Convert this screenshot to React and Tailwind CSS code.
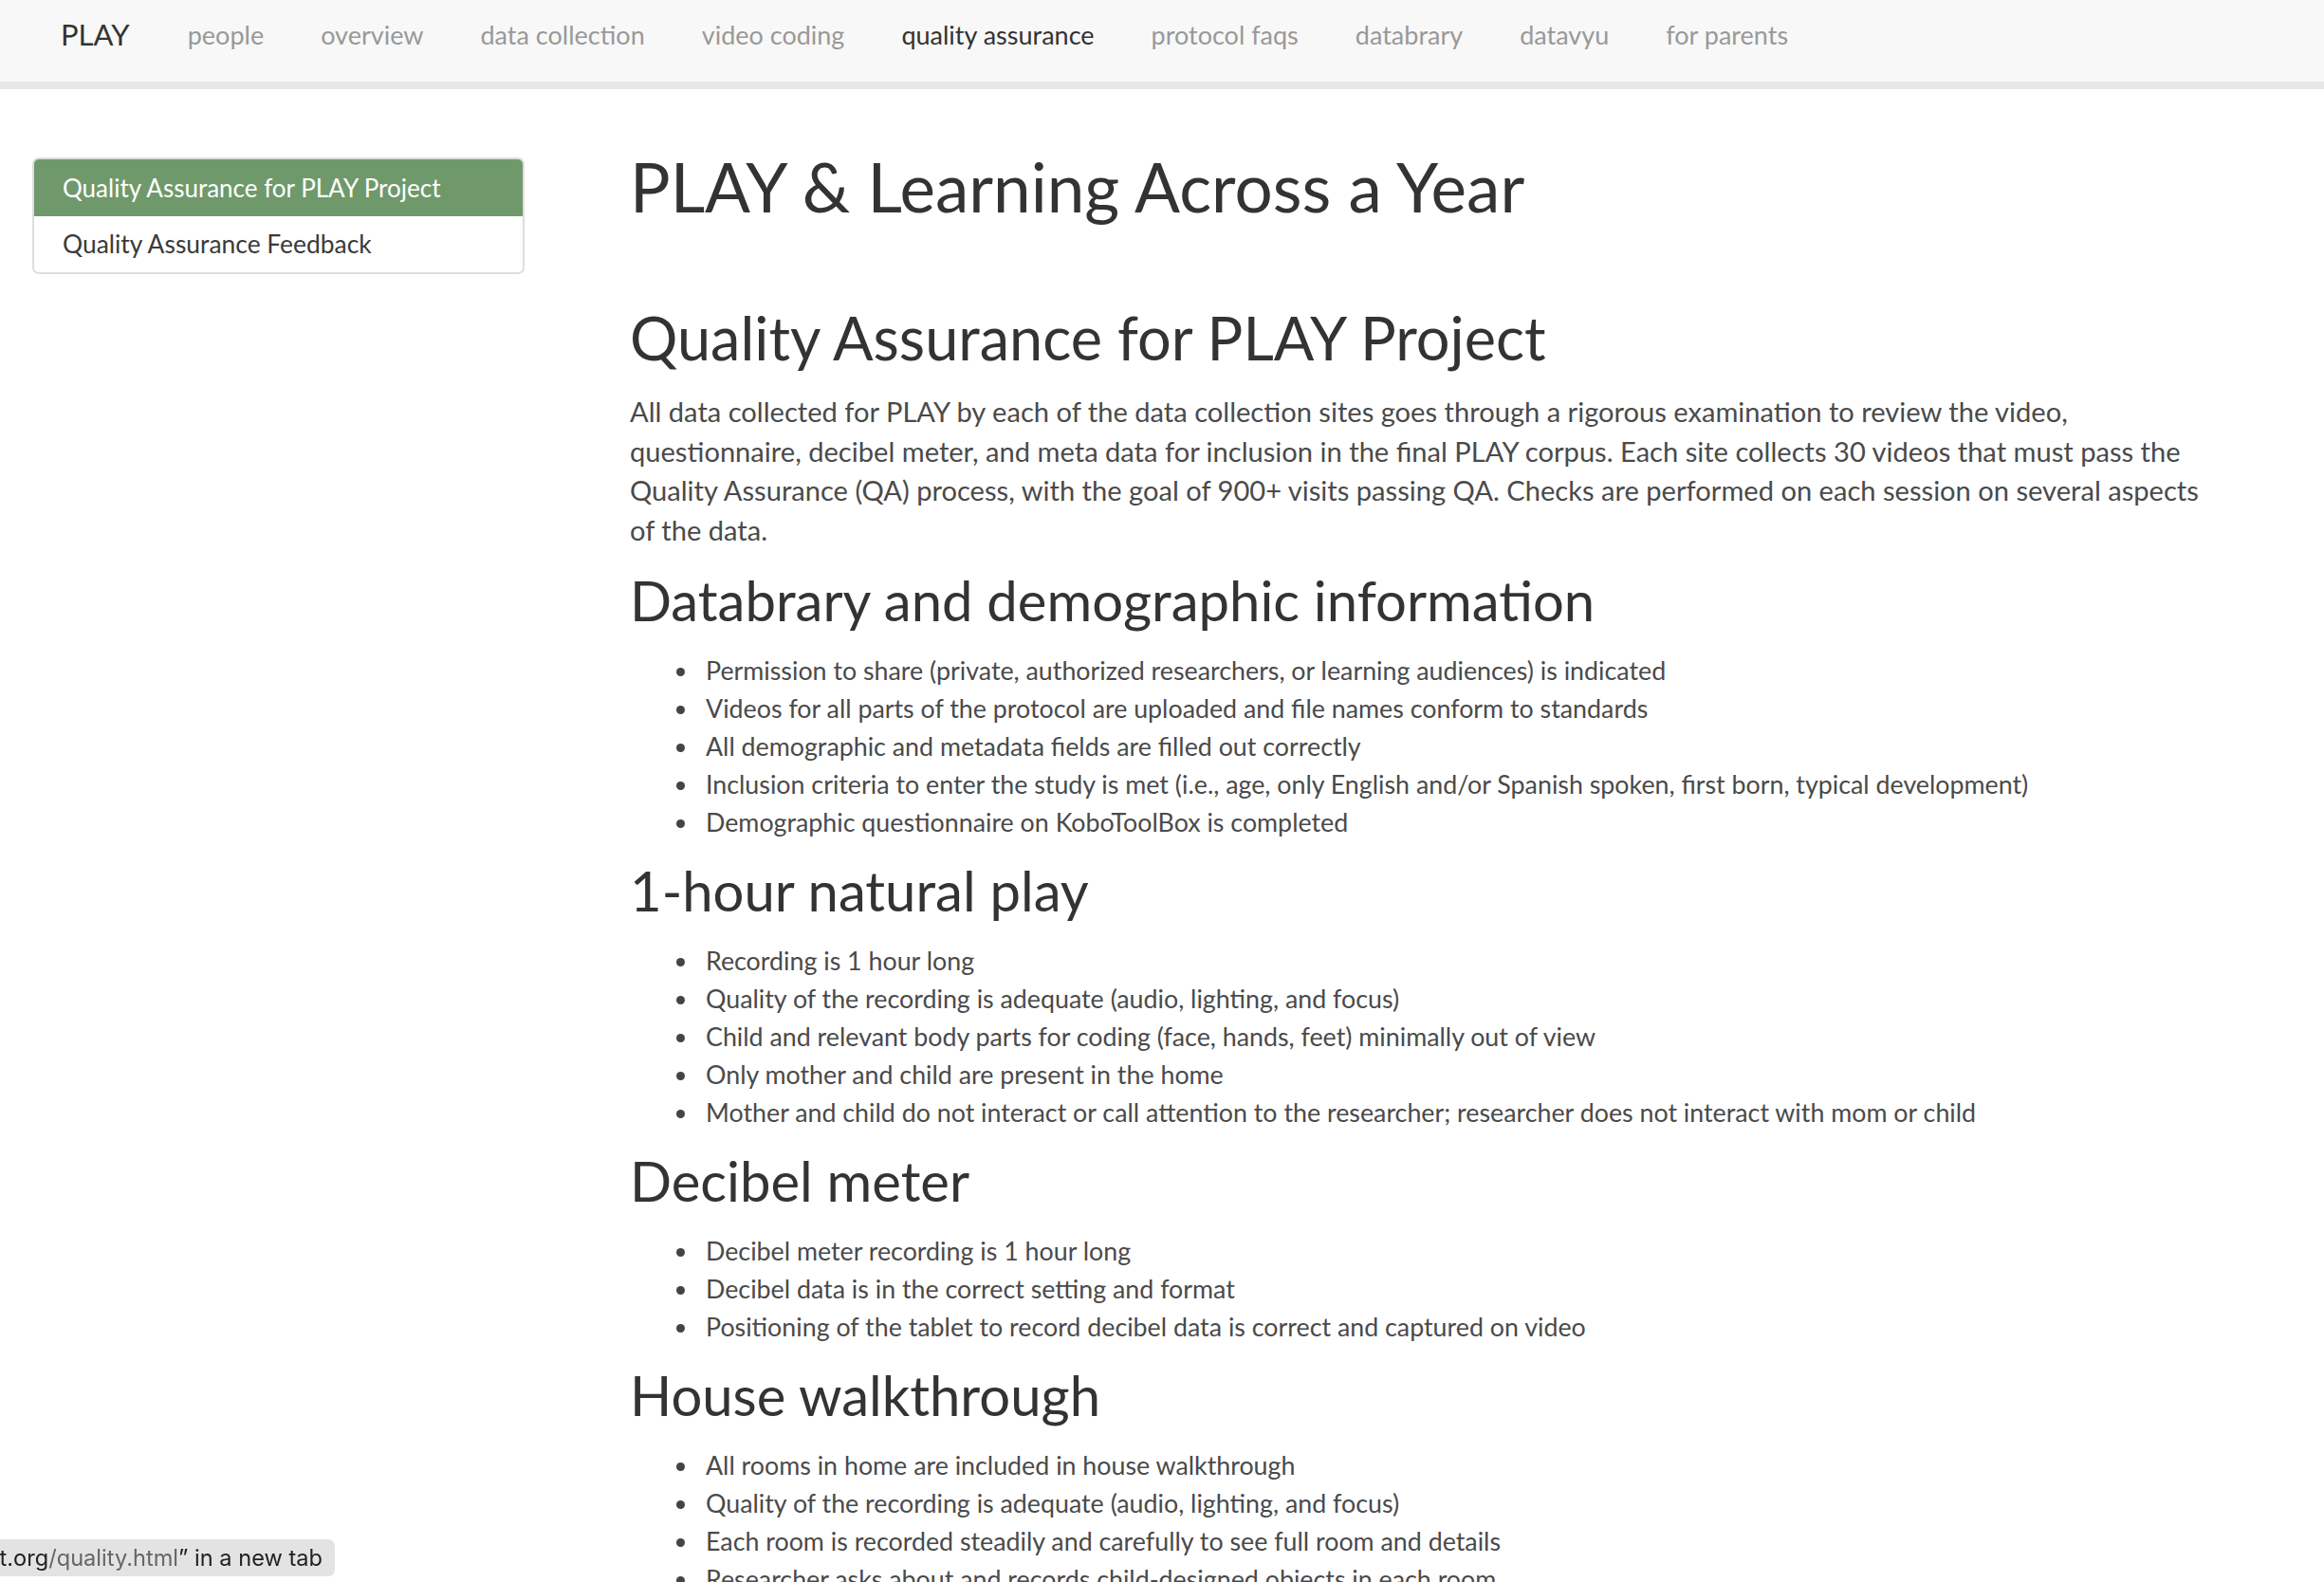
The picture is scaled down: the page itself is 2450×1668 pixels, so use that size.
import React from "react";

const navItems = [
  "people",
  "overview",
  "data collection",
  "video coding",
  "quality assurance",
  "protocol faqs",
  "databrary",
  "datavyu",
  "for parents",
];

const sections = [
  {
    title: "Databrary and demographic information",
    items: [
      "Permission to share (private, authorized researchers, or learning audiences) is indicated",
      "Videos for all parts of the protocol are uploaded and file names conform to standards",
      "All demographic and metadata fields are filled out correctly",
      "Inclusion criteria to enter the study is met (i.e., age, only English and/or Spanish spoken, first born, typical development)",
      "Demographic questionnaire on KoboToolBox is completed",
    ],
  },
  {
    title: "1-hour natural play",
    items: [
      "Recording is 1 hour long",
      "Quality of the recording is adequate (audio, lighting, and focus)",
      "Child and relevant body parts for coding (face, hands, feet) minimally out of view",
      "Only mother and child are present in the home",
      "Mother and child do not interact or call attention to the researcher; researcher does not interact with mom or child",
    ],
  },
  {
    title: "Decibel meter",
    items: [
      "Decibel meter recording is 1 hour long",
      "Decibel data is in the correct setting and format",
      "Positioning of the tablet to record decibel data is correct and captured on video",
    ],
  },
  {
    title: "House walkthrough",
    items: [
      "All rooms in home are included in house walkthrough",
      "Quality of the recording is adequate (audio, lighting, and focus)",
      "Each room is recorded steadily and carefully to see full room and details",
      "Researcher asks about and records child-designed objects in each room",
    ],
  },
];

export default function App() {
  return (
    <div
      className="min-h-screen bg-white text-[#333]"
      style={{ fontFamily: '"Source Sans Pro", Lato, "Open Sans", sans-serif' }}
    >
      <nav className="h-[94px] bg-[#f8f8f8] border-b-[8px] border-[#e7e7e7] flex items-center pl-[64px]">
        <span className="text-[31px] leading-none text-[#333] mr-[61px] -mt-[14px]">PLAY</span>
        <div className="flex items-center gap-[60px] -mt-[14px]">
          {navItems.map((n) => (
            <span
              key={n}
              className={
                "text-[27px] leading-none " +
                (n === "quality assurance" ? "text-[#333]" : "text-[#999]")
              }
            >
              {n}
            </span>
          ))}
        </div>
      </nav>

      <div className="flex pl-[34px]">
        <aside className="w-[519px] shrink-0 pt-[72px]">
          <div className="rounded-[7px] border-2 border-[#ddd] overflow-hidden">
            <div className="h-[60px] bg-[#6f996b] text-white text-[26px] flex items-center pl-[30px]">
              Quality Assurance for PLAY Project
            </div>
            <div className="h-[59px] bg-white text-[#3a3a3a] text-[26.4px] flex items-center pl-[30px]">
              Quality Assurance Feedback
            </div>
          </div>
        </aside>

        <main className="ml-[111px] w-[1661px] pt-[60px]">
          <h1 className="text-[71px] leading-[85px] text-[#333] font-normal">
            PLAY &amp; Learning Across a Year
          </h1>
          <h2 className="mt-[79px] text-[63px] leading-[76px] text-[#333] font-normal">
            Quality Assurance for PLAY Project
          </h2>
          <p className="mt-[19px] text-[29.1px] leading-[41.7px] text-[#4a4a4a]">
            All data collected for PLAY by each of the data collection sites goes through a
            rigorous examination to review the video, questionnaire, decibel meter, and meta
            data for inclusion in the final PLAY corpus. Each site collects 30 videos that must
            pass the Quality Assurance (QA) process, with the goal of 900+ visits passing QA.
            Checks are performed on each session on several aspects of the data.
          </p>
          {sections.map((s, i) => (
            <section key={s.title}>
              <h3
                className={
                  (i === 0 ? "mt-[18px] " : "mt-[17px] ") +
                  "text-[58px] leading-[70px] text-[#333] font-normal"
                }
              >
                {s.title}
              </h3>
              <ul className="mt-[19px] pl-[49px] text-[26.8px] leading-[40px] text-[#4a4a4a]">
                {s.items.map((it) => (
                  <li key={it} className="flex">
                    <span className="w-[31px] shrink-0 pt-[17px]">
                      <span className="block w-[9px] h-[9px] rounded-full bg-[#444]" />
                    </span>
                    <span>{it}</span>
                  </li>
                ))}
              </ul>
            </section>
          ))}
        </main>
      </div>

      <div className="fixed left-0 bottom-[6px] w-[353px] h-[39px] bg-[#e3e3e3] rounded-tr-[7px] rounded-br-[7px] overflow-hidden flex items-center justify-end pr-[13px]">
        <span
          className="whitespace-nowrap text-[23.6px] text-[#222]"
          style={{ fontFamily: 'Inter, "Liberation Sans", sans-serif' }}
        >
          t.org<span className="text-[#666]">/quality.html</span>” in a new tab
        </span>
      </div>
    </div>
  );
}
